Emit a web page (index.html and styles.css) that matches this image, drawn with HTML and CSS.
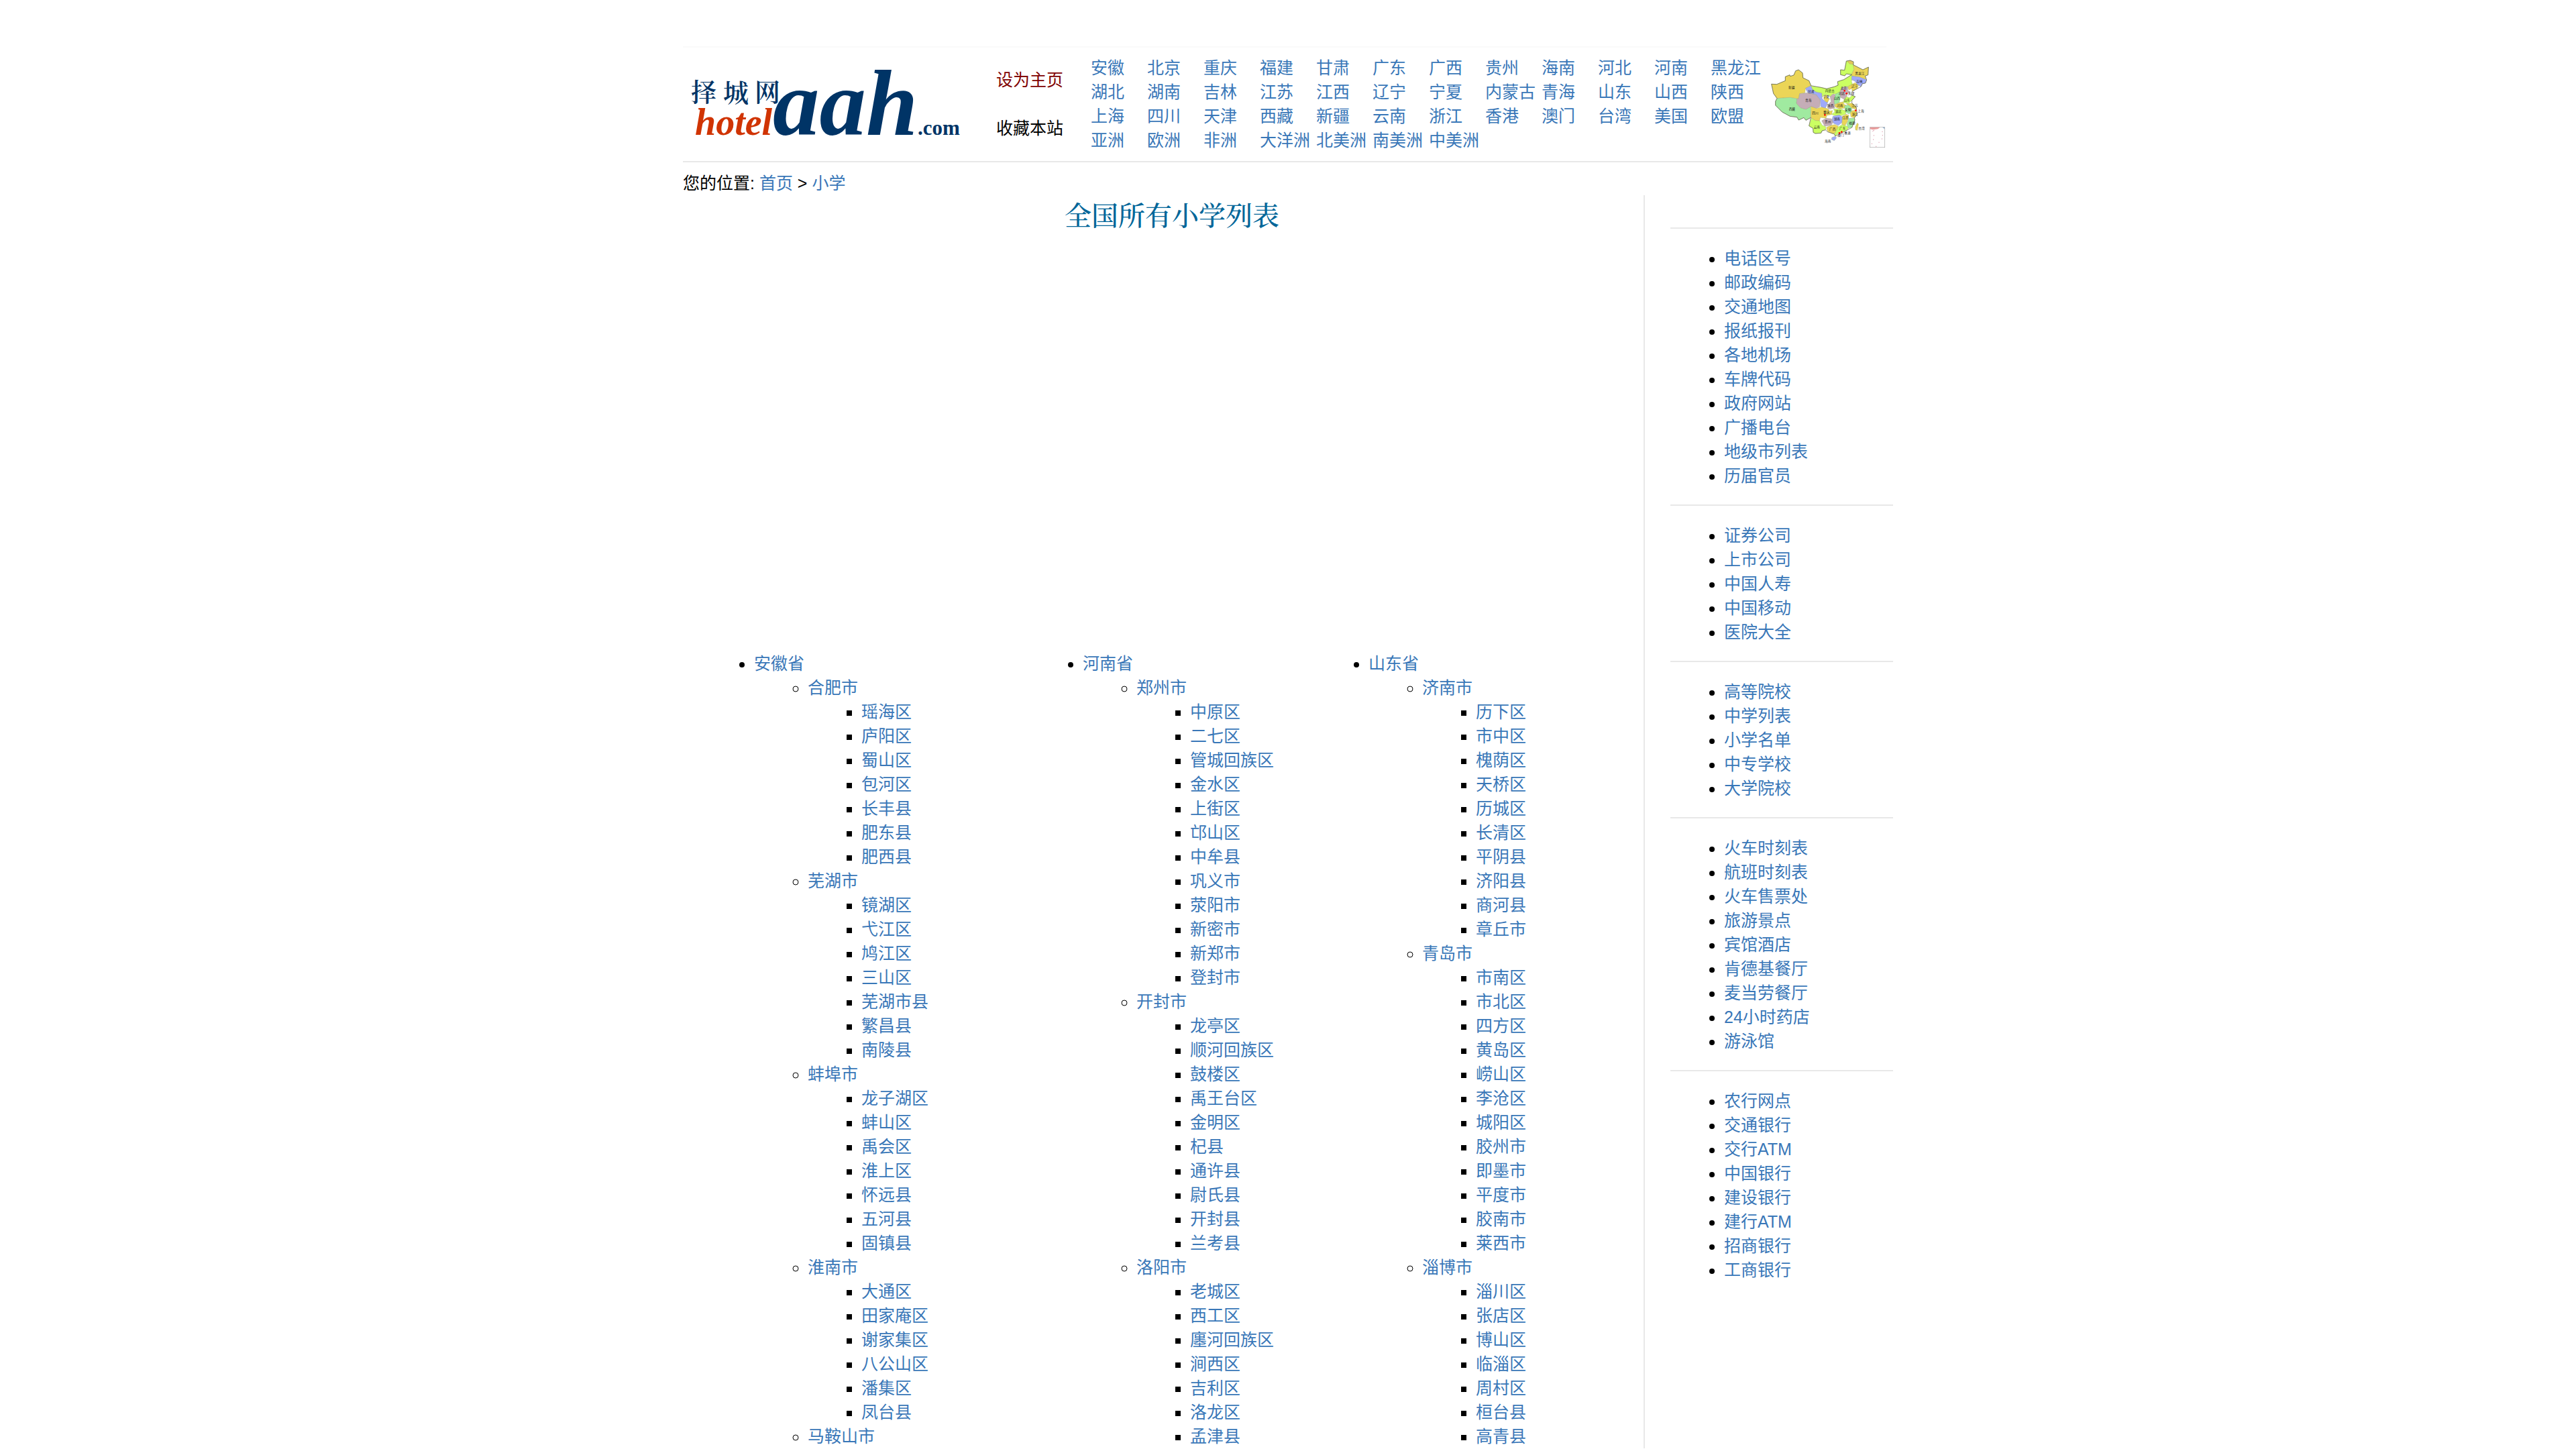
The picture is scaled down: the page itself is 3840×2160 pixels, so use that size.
FILE: index.html
```html
<!DOCTYPE html>
<html lang="zh-CN">
<head>
<meta charset="utf-8">
<meta name="viewport" content="width=device-width, initial-scale=1">
<title>全国所有小学列表</title>
<link rel="stylesheet" href="styles.css">
</head>
<body>
<div class="page">
  <header class="header">
    <div class="header-inner">
      <a class="logo" href="#" aria-label="择城网 hotelaah.com">
        <svg viewBox="0 0 420 120" width="420" height="120">
          <text class="logo-cn" x="12" y="56">择</text>
          <text class="logo-cn" x="60" y="57">城</text>
          <text class="logo-cn" x="107" y="56">网</text>
          <text class="logo-hotel" x="18" y="106">hotel</text>
          <text class="logo-aah" x="134" y="106">aah</text>
          <text class="logo-com" x="350" y="106">.com</text>
        </svg>
      </a>
      <div class="site-actions">
        <a class="set-home" href="#">设为主页</a>
        <a class="favorite" href="#">收藏本站</a>
      </div>
      <nav class="regions">
        <a href="#">安徽</a><a href="#">北京</a><a href="#">重庆</a><a href="#">福建</a><a href="#">甘肃</a><a href="#">广东</a><a href="#">广西</a><a href="#">贵州</a><a href="#">海南</a><a href="#">河北</a><a href="#">河南</a><a href="#">黑龙江</a>
        <a href="#">湖北</a><a href="#">湖南</a><a href="#">吉林</a><a href="#">江苏</a><a href="#">江西</a><a href="#">辽宁</a><a href="#">宁夏</a><a href="#">内蒙古</a><a href="#">青海</a><a href="#">山东</a><a href="#">山西</a><a href="#">陕西</a>
        <a href="#">上海</a><a href="#">四川</a><a href="#">天津</a><a href="#">西藏</a><a href="#">新疆</a><a href="#">云南</a><a href="#">浙江</a><a href="#">香港</a><a href="#">澳门</a><a href="#">台湾</a><a href="#">美国</a><a href="#">欧盟</a>
        <a href="#">亚洲</a><a href="#">欧洲</a><a href="#">非洲</a><a href="#">大洋洲</a><a href="#">北美洲</a><a href="#">南美洲</a><a href="#">中美洲</a>
      </nav>
      <a class="map" href="#" aria-label="中国地图">
        <svg viewBox="120 84 516 402" width="172" height="134">
          <g class="land">
            <path fill="#ebd557" d="M122 196L146 197L184 181L184 163L204 155L206 161L222 156L230 137L243 132L261 146L263 168L290 181L299 203L274 215L272 235L248 239L243 262L205 256L147 260L131 238L126 213Z"/>
            <path fill="#a0eaa0" d="M147 260L205 256L236 262L234 282L252 302L276 308L297 297L298 345L276 358L267 346L244 357L236 344L205 340L170 321L140 291L140 273Z"/>
            <path fill="#c5adb7" d="M248 239L284 235L322 243L340 266L338 298L320 306L299 296L276 309L252 302L234 282L236 262L243 262Z"/>
            <path fill="#9fa9fa" d="M274 215L299 203L307 221L322 231L347 236L349 262L366 276L375 272L370 290L362 306L342 296L340 266L322 243L284 235Z"/>
            <path fill="#cbff62" d="M299 205L343 211L369 217L403 208L420 201L418 185L446 176L481 154L457 150L450 159L431 154L431 132L449 134L457 93L474 92L488 108L491 131L481 151L489 162L480 184L484 196L463 208L443 207L434 217L430 240L397 240L384 252L376 246L361 244L350 254L347 236L322 231L307 221Z"/>
            <path fill="#e2c659" d="M461 94L474 90L488 96L489 108L472 106Z"/>
            <path fill="#ebd557" d="M488 110L508 120L531 132L556 120L554 155L541 160L545 176L515 164L481 160L481 151L491 131Z"/>
            <path fill="#9fa9fa" d="M481 160L515 164L548 177L542 192L529 194L522 208L506 198L496 184L480 176Z"/>
            <path fill="#ebd557" d="M463 208L484 196L496 190L511 202L507 215L483 229L482 216L468 222Z"/>
            <path fill="#c5adb7" d="M434 217L450 207L464 209L463 224L475 232L462 240L458 252L448 264L431 256L426 236Z"/>
            <path fill="#a0eaa0" d="M408 241L426 232L430 254L425 280L403 286L402 260Z"/>
            <path fill="#c5adb7" d="M384 252L399 240L407 244L402 264L403 286L405 303L382 308L373 302L380 283L389 274Z"/>
            <path fill="#ebd557" d="M362 244L370 247L368 256L382 262L372 278L362 272L355 260Z"/>
            <path fill="#cbff62" d="M448 264L458 252L471 257L482 247L497 252L482 269L466 283L442 278Z"/>
            <path fill="#ebd557" d="M404 288L425 279L442 275L447 287L457 291L448 304L428 307L408 299Z"/>
            <path fill="#ebd557" d="M457 284L482 281L493 289L502 302L500 309L481 304L471 294Z"/>
            <path fill="#a0eaa0" d="M448 294L466 289L481 303L482 321L468 329L453 321Z"/>
            <path fill="#cbff62" d="M400 307L431 307L452 315L455 329L436 337L402 336L391 331L405 321Z"/>
            <path fill="#ebd557" d="M299 296L324 305L347 299L377 307L380 317L395 314L391 332L370 336L366 349L341 345L337 360L318 359L298 346Z"/>
            <path fill="#c5adb7" d="M347 360L366 349L390 351L398 366L389 380L360 384Z"/>
            <path fill="#9fa9fa" d="M397 340L426 334L440 344L437 368L421 381L399 371L393 355Z"/>
            <path fill="#ebd557" d="M440 340L455 331L468 335L462 363L450 384L437 376Z"/>
            <path fill="#ebd557" d="M482 316L499 312L505 331L493 347L477 342L475 325Z"/>
            <path fill="#a0eaa0" d="M470 349L491 348L495 357L482 390L466 392L459 375Z"/>
            <path fill="#cbff62" d="M301 348L318 359L337 360L349 380L364 386L366 399L348 405L344 415L318 417L309 412L308 394L290 383Z"/>
            <path fill="#ebd557" d="M368 389L389 380L405 377L420 384L417 407L398 419L373 407Z"/>
            <path fill="#cbff62" d="M420 388L437 378L462 385L466 395L447 409L419 416L408 429L403 421Z"/>
            <path fill="#9fa9fa" d="M392 435L406 430L413 436L403 449L391 444Z"/>
            <path fill="#ebd557" d="M506 370L511 375L506 403L498 401L497 387Z"/>
          </g>
          <path class="coast" d="M122 196L146 197L184 181L184 163L204 155L206 161L222 156L230 137L243 132L261 146L263 168L290 181L299 203L343 211L369 217L403 208L420 201L418 185L446 176L481 154L457 150L450 159L431 154L431 132L449 134L457 93L474 90L489 96L488 110L531 132L556 120L554 155L541 160L548 177L542 192L529 194L522 208L506 216L483 229L480 245L497 252L482 269L482 281L502 302L505 331L493 347L495 357L482 390L447 409L408 429L403 419L373 410L364 401L348 405L344 415L318 417L309 412L308 394L290 383L298 346L276 358L267 346L244 357L236 344L205 340L170 321L140 291L140 273L147 260L131 238Z"/>
          <g class="cities"><circle cx="449" cy="226" r="4"/><circle cx="458" cy="238" r="4"/><circle cx="499" cy="314" r="4"/><circle cx="361" cy="334" r="4"/><circle cx="426" cy="415" r="4"/><circle cx="436" cy="410" r="4"/></g>
          <g class="map-labels">
            <text x="198" y="217">新疆</text><text x="200" y="311">西藏</text><text x="273" y="272">青海</text><text x="285" y="233">甘肃</text><text x="362" y="231">内蒙古</text><text x="353" y="259">宁夏</text><text x="496" y="152">黑龙江</text><text x="501" y="188">吉林</text><text x="480" y="211">辽宁</text><text x="431" y="220">北京</text><text x="422" y="243">河北</text><text x="465" y="244">天津</text><text x="401" y="264">山西</text><text x="446" y="272">山东</text><text x="372" y="297">陕西</text><text x="414" y="297">河南</text><text x="480" y="297">江苏</text><text x="450" y="315">安徽</text><text x="508" y="320">上海</text><text x="407" y="325">湖北</text><text x="304" y="331">四川</text><text x="354" y="326">重庆</text><text x="482" y="337">浙江</text><text x="401" y="357">湖南</text><text x="439" y="352">江西</text><text x="360" y="370">贵州</text><text x="469" y="375">福建</text><text x="311" y="392">云南</text><text x="381" y="401">广西</text><text x="426" y="400">广东</text><text x="511" y="399">台湾</text><text x="448" y="420">香港</text><text x="417" y="430">澳门</text><text x="360" y="457">海南</text>
          </g>
          <rect x="562" y="389" width="67" height="90" fill="#fff" stroke="#aaa" stroke-width="2"/>
          <path d="M563 389h45l-10 8-24 3-11-3z" fill="#e99a9a"/><path d="M618 389h10v8z" fill="#8aa8c8"/>
          <path d="M574 407l8-5M580 424v4M578 442v4M571 461v4M590 473v4M603 455v4M616 439v4M619 423v4M618 407v4" stroke="#dd9aac" stroke-width="3"/>
        </svg>
      </a>
    </div>
  </header>
  <div class="breadcrumb">您的位置: <a href="#">首页</a> &gt; <a href="#">小学</a></div>
  <div class="body">
    <main class="main">
      <h1 class="title">全国所有小学列表</h1>
      <div class="banner"></div>
      <div class="provinces">
        <ul>
          <li><a href="#">安徽省</a>
            <ul>
              <li><a href="#">合肥市</a>
                <ul>
                  <li><a href="#">瑶海区</a></li>
                  <li><a href="#">庐阳区</a></li>
                  <li><a href="#">蜀山区</a></li>
                  <li><a href="#">包河区</a></li>
                  <li><a href="#">长丰县</a></li>
                  <li><a href="#">肥东县</a></li>
                  <li><a href="#">肥西县</a></li>
                </ul>
              </li>
              <li><a href="#">芜湖市</a>
                <ul>
                  <li><a href="#">镜湖区</a></li>
                  <li><a href="#">弋江区</a></li>
                  <li><a href="#">鸠江区</a></li>
                  <li><a href="#">三山区</a></li>
                  <li><a href="#">芜湖市县</a></li>
                  <li><a href="#">繁昌县</a></li>
                  <li><a href="#">南陵县</a></li>
                </ul>
              </li>
              <li><a href="#">蚌埠市</a>
                <ul>
                  <li><a href="#">龙子湖区</a></li>
                  <li><a href="#">蚌山区</a></li>
                  <li><a href="#">禹会区</a></li>
                  <li><a href="#">淮上区</a></li>
                  <li><a href="#">怀远县</a></li>
                  <li><a href="#">五河县</a></li>
                  <li><a href="#">固镇县</a></li>
                </ul>
              </li>
              <li><a href="#">淮南市</a>
                <ul>
                  <li><a href="#">大通区</a></li>
                  <li><a href="#">田家庵区</a></li>
                  <li><a href="#">谢家集区</a></li>
                  <li><a href="#">八公山区</a></li>
                  <li><a href="#">潘集区</a></li>
                  <li><a href="#">凤台县</a></li>
                </ul>
              </li>
              <li><a href="#">马鞍山市</a></li>
            </ul>
          </li>
        </ul>
        <ul>
          <li><a href="#">河南省</a>
            <ul>
              <li><a href="#">郑州市</a>
                <ul>
                  <li><a href="#">中原区</a></li>
                  <li><a href="#">二七区</a></li>
                  <li><a href="#">管城回族区</a></li>
                  <li><a href="#">金水区</a></li>
                  <li><a href="#">上街区</a></li>
                  <li><a href="#">邙山区</a></li>
                  <li><a href="#">中牟县</a></li>
                  <li><a href="#">巩义市</a></li>
                  <li><a href="#">荥阳市</a></li>
                  <li><a href="#">新密市</a></li>
                  <li><a href="#">新郑市</a></li>
                  <li><a href="#">登封市</a></li>
                </ul>
              </li>
              <li><a href="#">开封市</a>
                <ul>
                  <li><a href="#">龙亭区</a></li>
                  <li><a href="#">顺河回族区</a></li>
                  <li><a href="#">鼓楼区</a></li>
                  <li><a href="#">禹王台区</a></li>
                  <li><a href="#">金明区</a></li>
                  <li><a href="#">杞县</a></li>
                  <li><a href="#">通许县</a></li>
                  <li><a href="#">尉氏县</a></li>
                  <li><a href="#">开封县</a></li>
                  <li><a href="#">兰考县</a></li>
                </ul>
              </li>
              <li><a href="#">洛阳市</a>
                <ul>
                  <li><a href="#">老城区</a></li>
                  <li><a href="#">西工区</a></li>
                  <li><a href="#">廛河回族区</a></li>
                  <li><a href="#">涧西区</a></li>
                  <li><a href="#">吉利区</a></li>
                  <li><a href="#">洛龙区</a></li>
                  <li><a href="#">孟津县</a></li>
                </ul>
              </li>
            </ul>
          </li>
        </ul>
        <ul>
          <li><a href="#">山东省</a>
            <ul>
              <li><a href="#">济南市</a>
                <ul>
                  <li><a href="#">历下区</a></li>
                  <li><a href="#">市中区</a></li>
                  <li><a href="#">槐荫区</a></li>
                  <li><a href="#">天桥区</a></li>
                  <li><a href="#">历城区</a></li>
                  <li><a href="#">长清区</a></li>
                  <li><a href="#">平阴县</a></li>
                  <li><a href="#">济阳县</a></li>
                  <li><a href="#">商河县</a></li>
                  <li><a href="#">章丘市</a></li>
                </ul>
              </li>
              <li><a href="#">青岛市</a>
                <ul>
                  <li><a href="#">市南区</a></li>
                  <li><a href="#">市北区</a></li>
                  <li><a href="#">四方区</a></li>
                  <li><a href="#">黄岛区</a></li>
                  <li><a href="#">崂山区</a></li>
                  <li><a href="#">李沧区</a></li>
                  <li><a href="#">城阳区</a></li>
                  <li><a href="#">胶州市</a></li>
                  <li><a href="#">即墨市</a></li>
                  <li><a href="#">平度市</a></li>
                  <li><a href="#">胶南市</a></li>
                  <li><a href="#">莱西市</a></li>
                </ul>
              </li>
              <li><a href="#">淄博市</a>
                <ul>
                  <li><a href="#">淄川区</a></li>
                  <li><a href="#">张店区</a></li>
                  <li><a href="#">博山区</a></li>
                  <li><a href="#">临淄区</a></li>
                  <li><a href="#">周村区</a></li>
                  <li><a href="#">桓台县</a></li>
                  <li><a href="#">高青县</a></li>
                </ul>
              </li>
            </ul>
          </li>
        </ul>
      </div>
    </main>
    <aside class="sidebar">
      <ul>
        <li><a href="#">电话区号</a></li>
        <li><a href="#">邮政编码</a></li>
        <li><a href="#">交通地图</a></li>
        <li><a href="#">报纸报刊</a></li>
        <li><a href="#">各地机场</a></li>
        <li><a href="#">车牌代码</a></li>
        <li><a href="#">政府网站</a></li>
        <li><a href="#">广播电台</a></li>
        <li><a href="#">地级市列表</a></li>
        <li><a href="#">历届官员</a></li>
      </ul>
      <ul>
        <li><a href="#">证券公司</a></li>
        <li><a href="#">上市公司</a></li>
        <li><a href="#">中国人寿</a></li>
        <li><a href="#">中国移动</a></li>
        <li><a href="#">医院大全</a></li>
      </ul>
      <ul>
        <li><a href="#">高等院校</a></li>
        <li><a href="#">中学列表</a></li>
        <li><a href="#">小学名单</a></li>
        <li><a href="#">中专学校</a></li>
        <li><a href="#">大学院校</a></li>
      </ul>
      <ul>
        <li><a href="#">火车时刻表</a></li>
        <li><a href="#">航班时刻表</a></li>
        <li><a href="#">火车售票处</a></li>
        <li><a href="#">旅游景点</a></li>
        <li><a href="#">宾馆酒店</a></li>
        <li><a href="#">肯德基餐厅</a></li>
        <li><a href="#">麦当劳餐厅</a></li>
        <li><a href="#">24小时药店</a></li>
        <li><a href="#">游泳馆</a></li>
      </ul>
      <ul>
        <li><a href="#">农行网点</a></li>
        <li><a href="#">交通银行</a></li>
        <li><a href="#">交行ATM</a></li>
        <li><a href="#">中国银行</a></li>
        <li><a href="#">建设银行</a></li>
        <li><a href="#">建行ATM</a></li>
        <li><a href="#">招商银行</a></li>
        <li><a href="#">工商银行</a></li>
      </ul>
    </aside>
  </div>
</div>
</body>
</html>
```
FILE: styles.css
```css
* {
  box-sizing: border-box;
}

body {
  margin: 0;
  background: #fff;
  color: #000;
  font-family: "Liberation Sans", "Noto Sans CJK SC", sans-serif;
  font-size: 25px;
  line-height: 36px;
}

a {
  color: #3977b8;
  text-decoration: none;
}

a:hover {
  text-decoration: underline;
}

ul {
  margin: 0;
  padding-left: 80px;
}

.page {
  max-width: 1804px;
  margin: 0 auto;
  padding-top: 69px;
}

/* Header */
.header {
  border-bottom: 2px solid #e8e8e8;
}

.header-inner {
  display: flex;
  align-items: center;
  min-height: 171px;
  margin-right: 10px;
  padding-bottom: 2px;
  border-top: 2px solid #fafafa;
}

.header svg {
  display: block;
}

.logo {
  margin-right: 47px;
}

.logo-cn {
  font: 600 38px "Noto Serif CJK SC", "Noto Sans CJK SC", serif;
  fill: #003466;
}

.logo-hotel {
  font: italic 700 56px "Liberation Serif", serif;
  fill: #d03403;
}

.logo-aah {
  font: italic 700 139px "Liberation Serif", serif;
  fill: #003466;
}

.logo-com {
  font: 700 31px "Liberation Serif", serif;
  fill: #003466;
}

.site-actions {
  display: flex;
  flex-direction: column;
  gap: 36px;
  flex: 1;
}

.set-home {
  color: #800000;
}

.favorite {
  color: #000;
}

.regions {
  display: grid;
  grid-template-columns: repeat(12, 84px);
  white-space: nowrap;
}

.map {
  margin-left: 6px;
}

.land path {
  stroke: #8d9a6c;
  stroke-width: 1;
  stroke-linejoin: round;
}

.coast {
  fill: none;
  stroke: #55553f;
  stroke-width: 2;
  stroke-linejoin: round;
}

.cities {
  fill: #f00;
}

.map-labels {
  font-size: 14px;
  fill: #111;
}

/* Breadcrumb */
.breadcrumb {
  padding-top: 13px;
}

/* Body */
.body {
  display: flex;
}

.main {
  flex: 1;
  padding-left: 26px;
  border-right: 2px solid #e8e8e8;
}

.title {
  margin: 0;
  color: #006699;
  font: 500 40px/64px "Liberation Serif", "Noto Serif CJK SC", serif;
  text-align: center;
}

.banner {
  height: 616px;
}

.provinces {
  display: grid;
  grid-template-columns: 490fr 426fr 490fr;
}

/* Sidebar */
.sidebar {
  width: 332px;
  margin-left: 38px;
  padding-top: 48px;
}

.sidebar ul {
  padding-top: 26px;
  padding-bottom: 25px;
  border-top: 2px solid #e8e8e8;
}
```
